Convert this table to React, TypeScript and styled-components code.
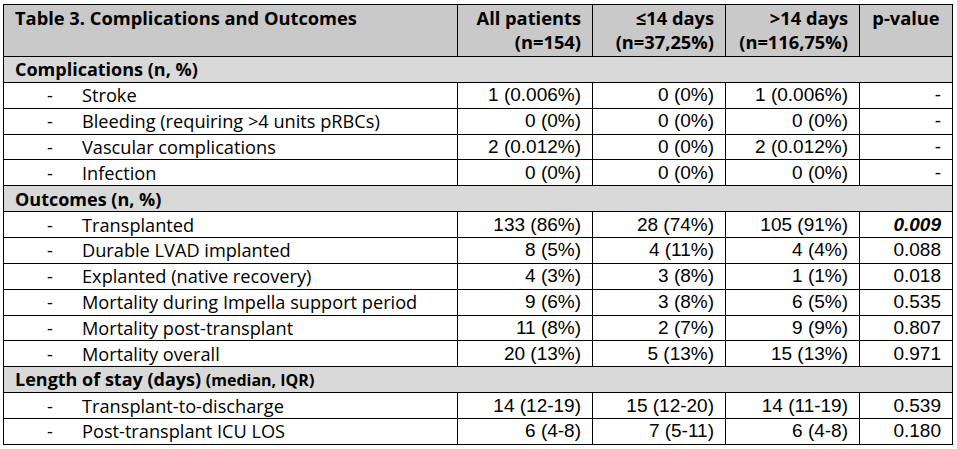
import React from 'react'
import styled, { createGlobalStyle } from 'styled-components'

const GlobalStyle = createGlobalStyle`
    body {
        margin: 0;
        background: #ffffff;
        font-family: "Liberation Sans", Arial, sans-serif;
        color: #000;
    }
`

const Page = styled.div`
    padding: 4px 0 0 3px;
`

const Table = styled.table`
    border-collapse: collapse;
    table-layout: fixed;
    width: 949px;
    border: 1px solid #000;
`

const HeadRow = styled.tr`
    background: #c9c9c9;
`

const HeadCell = styled.th<{ $align?: string }>`
    border: 1px solid #000;
    height: 50px;
    box-sizing: border-box;
    padding: 1px 11px 2px 11px;
    vertical-align: top;
    text-align: ${p => p.$align || 'right'};
    font-family: "Open Sans", sans-serif;
    font-weight: 700;
    font-size: 18.3px;
    line-height: 24px;
    white-space: nowrap;
`

const SectionRow = styled.tr`
    background: #d9d9d9;
`

const SectionCell = styled.td`
    border: 1px solid #000;
    height: 25.87px;
    box-sizing: border-box;
    padding: 0 11px;
    font-family: "Open Sans", sans-serif;
    font-weight: 700;
    font-size: 18px;
    line-height: 20px;
`

const Small = styled.span`
    font-size: 16px;
`

const Row = styled.tr``

const LabelCell = styled.td`
    border: 1px solid #000;
    height: 25.87px;
    box-sizing: border-box;
    padding: 0;
    font-family: "Open Sans", sans-serif;
    font-size: 18.2px;
    line-height: 20px;
`

const LabelInner = styled.div`
    display: flex;
    align-items: center;
`

const Dash = styled.span`
    width: 78px;
    padding-left: 43px;
    box-sizing: border-box;
`

const ValueCell = styled.td<{ $strong?: boolean }>`
    border: 1px solid #000;
    height: 25.87px;
    box-sizing: border-box;
    padding: 0 11px 0 0;
    text-align: right;
    font-size: 19px;
    line-height: 20px;
    font-weight: ${p => (p.$strong ? 700 : 400)};
    font-style: ${p => (p.$strong ? 'italic' : 'normal')};
    white-space: nowrap;
`

type DataRow = [string, string, string, string, string]

const sections: { title: React.ReactNode; rows: DataRow[]; bold?: number }[] = [
    {
        title: 'Complications (n, %)',
        rows: [
            ['Stroke', '1 (0.006%)', '0 (0%)', '1 (0.006%)', '-'],
            ['Bleeding (requiring >4 units pRBCs)', '0 (0%)', '0 (0%)', '0 (0%)', '-'],
            ['Vascular complications', '2 (0.012%)', '0 (0%)', '2 (0.012%)', '-'],
            ['Infection', '0 (0%)', '0 (0%)', '0 (0%)', '-'],
        ],
    },
    {
        title: 'Outcomes (n, %)',
        bold: 0,
        rows: [
            ['Transplanted', '133 (86%)', '28 (74%)', '105 (91%)', '0.009'],
            ['Durable LVAD implanted', '8 (5%)', '4 (11%)', '4 (4%)', '0.088'],
            ['Explanted (native recovery)', '4 (3%)', '3 (8%)', '1 (1%)', '0.018'],
            ['Mortality during Impella support period', '9 (6%)', '3 (8%)', '6 (5%)', '0.535'],
            ['Mortality post-transplant', '11 (8%)', '2 (7%)', '9 (9%)', '0.807'],
            ['Mortality overall', '20 (13%)', '5 (13%)', '15 (13%)', '0.971'],
        ],
    },
    {
        title: <>Length of stay (days) <Small>(median, IQR)</Small></>,
        rows: [
            ['Transplant-to-discharge', '14 (12-19)', '15 (12-20)', '14 (11-19)', '0.539'],
            ['Post-transplant ICU LOS', '6 (4-8)', '7 (5-11)', '6 (4-8)', '0.180'],
        ],
    },
]

const App = () => {
    return (
        <Page>
            <GlobalStyle />
            <Table>
                <colgroup>
                    <col style={{ width: 454 }} />
                    <col style={{ width: 135 }} />
                    <col style={{ width: 133 }} />
                    <col style={{ width: 134 }} />
                    <col style={{ width: 93 }} />
                </colgroup>
                <thead>
                    <HeadRow>
                        <HeadCell $align="left">Table 3. Complications and Outcomes</HeadCell>
                        <HeadCell>All patients<br />(n=154)</HeadCell>
                        <HeadCell>≤14 days<br />(n=37,25%)</HeadCell>
                        <HeadCell>&gt;14 days<br />(n=116,75%)</HeadCell>
                        <HeadCell $align="center">p-value</HeadCell>
                    </HeadRow>
                </thead>
                <tbody>
                    {sections.map((section, si) => (
                        <React.Fragment key={si}>
                            <SectionRow>
                                <SectionCell colSpan={5}>{section.title}</SectionCell>
                            </SectionRow>
                            {section.rows.map((row, ri) => (
                                <Row key={ri}>
                                    <LabelCell>
                                        <LabelInner>
                                            <Dash>-</Dash>
                                            <span>{row[0]}</span>
                                        </LabelInner>
                                    </LabelCell>
                                    <ValueCell>{row[1]}</ValueCell>
                                    <ValueCell>{row[2]}</ValueCell>
                                    <ValueCell>{row[3]}</ValueCell>
                                    <ValueCell $strong={section.bold === ri}>{row[4]}</ValueCell>
                                </Row>
                            ))}
                        </React.Fragment>
                    ))}
                </tbody>
            </Table>
        </Page>
    )
}

export default App
